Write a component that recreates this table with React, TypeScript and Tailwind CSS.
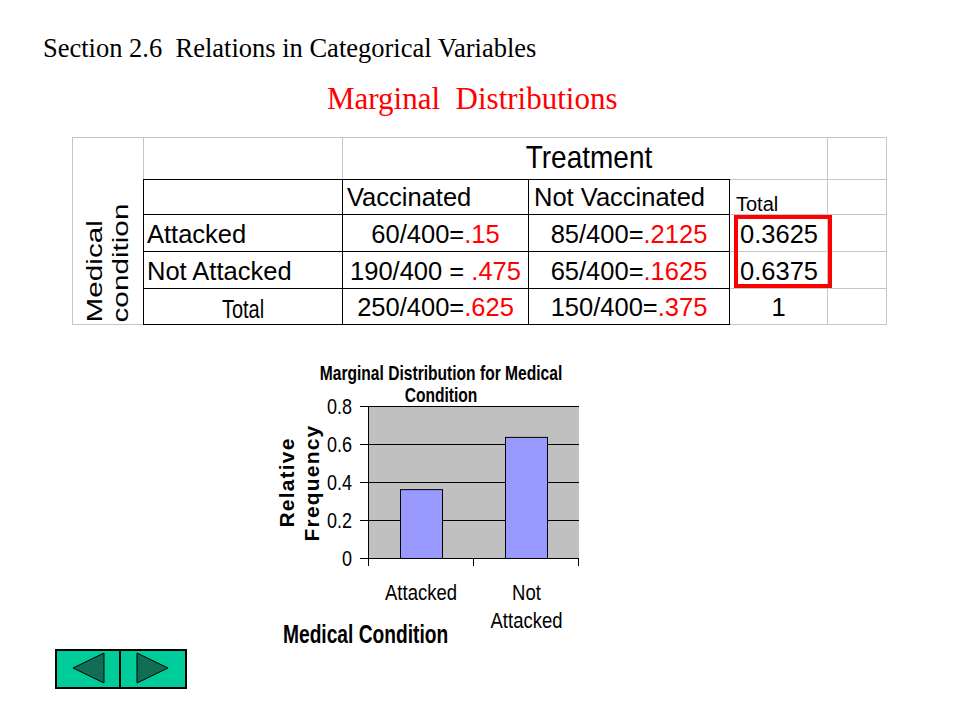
import React from "react";

const SANS = "font-['Liberation_Sans',Arial,sans-serif]";
const SERIF = "font-['Liberation_Serif','Times_New_Roman',serif]";

function Num({ a, b }: { a: string; b: string }) {
  return (
    <span className="whitespace-pre">
      {a}
      <span className="text-[#ff0000]">{b}</span>
    </span>
  );
}

const levels = [
  { v: "0", y: 203 },
  { v: "0.2", y: 165 },
  { v: "0.4", y: 127 },
  { v: "0.6", y: 89 },
  { v: "0.8", y: 51 },
];

const bars = [
  { x: 130, v: 0.3625 },
  { x: 235, v: 0.6375 },
];

function Chart() {
  const font = "'Liberation Sans', Arial, sans-serif";
  return (
    <svg
      width="330"
      height="294"
      viewBox="0 0 330 294"
      className="block mt-[30px] ml-[270px]"
      fontFamily={font}
    >
      <rect x="98" y="51" width="211" height="152" fill="#c0c0c0" />
      {levels.map((l) => (
        <line key={l.v} x1="90" x2="309" y1={l.y + 0.5} y2={l.y + 0.5} stroke="#000" strokeWidth="1" />
      ))}
      {bars.map((b) => (
        <rect
          key={b.x}
          x={b.x + 0.5}
          y={203.5 - b.v * 190}
          width="42"
          height={b.v * 190}
          fill="#9999ff"
          stroke="#000"
          strokeWidth="1"
        />
      ))}
      <line x1="98.5" x2="98.5" y1="51" y2="204" stroke="#000" strokeWidth="1" />
      <line x1="98" x2="309" y1="203.5" y2="203.5" stroke="#000" strokeWidth="1" />
      {[98.5, 203.5, 308.5].map((x) => (
        <line key={x} x1={x} x2={x} y1="203" y2="211" stroke="#000" strokeWidth="1" />
      ))}
      {levels.map((l) => (
        <text
          key={"t" + l.v}
          transform={`translate(82 ${l.y + 7.5}) scale(1 1.2)`}
          textAnchor="end"
          fontSize="18"
          fill="#000"
        >
          {l.v}
        </text>
      ))}
      <text transform="translate(171 25) scale(1 1.25)" textAnchor="middle" fontSize="15.6" fontWeight="bold">
        Marginal Distribution for Medical
      </text>
      <text transform="translate(171 47) scale(1 1.25)" textAnchor="middle" fontSize="15.6" fontWeight="bold">
        Condition
      </text>
      <text transform="translate(24 127.5) rotate(-90)" textAnchor="middle" fontSize="21" fontWeight="bold" letterSpacing="1.2">
        Relative
      </text>
      <text transform="translate(49 128) rotate(-90)" textAnchor="middle" fontSize="21" fontWeight="bold" letterSpacing="1.2">
        Frequency
      </text>
      <text transform="translate(151 245) scale(1 1.2)" textAnchor="middle" fontSize="18.5">
        Attacked
      </text>
      <text transform="translate(256.5 245) scale(1 1.2)" textAnchor="middle" fontSize="18.5">
        Not
      </text>
      <text transform="translate(256.5 273) scale(1 1.2)" textAnchor="middle" fontSize="18.5">
        Attacked
      </text>
      <text transform="translate(13 288) scale(1 1.3)" fontSize="19.2" fontWeight="bold">
        Medical Condition
      </text>
    </svg>
  );
}

function Nav() {
  return (
    <div className="ml-[55px] flex w-[132px] h-[40px] border-2 border-black bg-[#00cc99]">
      <div className="w-[64px] h-full border-r-2 border-black">
        <svg width="62" height="36" className="block">
          <polygon points="16,17 47,2 47,32" fill="#116e55" stroke="#000" strokeWidth="1" />
        </svg>
      </div>
      <div className="w-[64px] h-full">
        <svg width="64" height="36" className="block">
          <polygon points="16,2 16,32 47,17" fill="#116e55" stroke="#000" strokeWidth="1" />
        </svg>
      </div>
    </div>
  );
}

function Table() {
  const g = "border-[#c6c6c6]";
  const k = "border-black";
  return (
    <div
      className={`relative mt-[23px] ml-[72px] w-[815px] grid grid-cols-[70px_200px_186px_201px_98px_59px] grid-rows-[41px_36px_37px_37px_36px] border-t border-l ${g} ${SANS} text-[25.5px] leading-none text-black`}
    >
      {/* left merged column */}
      <div className={`col-start-1 row-start-1 row-span-5 border-b ${g} flex items-end justify-center pb-[17px]`}>
        <div className="[writing-mode:vertical-rl] rotate-180 scale-y-135 text-[22px] leading-[26px] whitespace-nowrap">
          Medical
          <br />
          condition
        </div>
      </div>

      {/* row 0 */}
      <div className={`col-start-2 row-start-1 border-l border-r ${g}`} />
      <div className={`col-start-3 col-span-3 row-start-1 border-r ${g} flex items-end justify-center pb-[5px] pl-[8px]`}>
        <span className="inline-block text-[28px] scale-y-110 origin-bottom">Treatment</span>
      </div>
      <div className={`col-start-6 row-start-1 border-r ${g}`} />

      {/* row 1 */}
      <div className={`col-start-2 row-start-2 border-l border-r border-t border-b ${k}`} />
      <div className={`col-start-3 row-start-2 border-r border-t border-b ${k} flex items-end pl-[4px] pb-[4px]`}>
        Vaccinated
      </div>
      <div className={`col-start-4 row-start-2 border-r border-t border-b ${k} flex items-end pl-[5px] pb-[4px]`}>
        Not Vaccinated
      </div>
      <div className={`col-start-5 row-start-2 border-r border-t border-b ${g} flex items-end pl-[6px] pb-0 text-[20px]`}>
        Total
      </div>
      <div className={`col-start-6 row-start-2 border-r border-t border-b ${g}`} />

      {/* row 2 */}
      <div className={`col-start-2 row-start-3 border-l border-r border-b ${k} flex items-end pl-[3px] pb-[4px]`}>
        Attacked
      </div>
      <div className={`col-start-3 row-start-3 border-r border-b ${k} flex items-end justify-center pb-[4px]`}>
        <Num a="60/400=" b=".15" />
      </div>
      <div className={`col-start-4 row-start-3 border-r border-b ${k} flex items-end justify-center pb-[4px]`}>
        <Num a="85/400=" b=".2125" />
      </div>
      <div className={`col-start-5 row-start-3 border-r border-b ${g} flex items-end pl-[10px] pb-[4px]`}>
        0.3625
      </div>
      <div className={`col-start-6 row-start-3 border-r border-b ${g}`} />

      {/* row 3 */}
      <div className={`col-start-2 row-start-4 border-l border-r border-b ${k} flex items-end pl-[3px] pb-[4px]`}>
        Not Attacked
      </div>
      <div className={`col-start-3 row-start-4 border-r border-b ${k} flex items-end justify-center pb-[4px]`}>
        <Num a="190/400 = " b=".475" />
      </div>
      <div className={`col-start-4 row-start-4 border-r border-b ${k} flex items-end justify-center pb-[4px]`}>
        <Num a="65/400=" b=".1625" />
      </div>
      <div className={`col-start-5 row-start-4 border-r border-b ${g} flex items-end pl-[10px] pb-[4px]`}>
        0.6375
      </div>
      <div className={`col-start-6 row-start-4 border-r border-b ${g}`} />

      {/* row 4 */}
      <div className={`col-start-2 row-start-5 border-l border-r border-b ${k} flex items-end justify-center pb-[2px]`}>
        <span className="inline-block text-[20px] scale-y-125 origin-bottom">Total</span>
      </div>
      <div className={`col-start-3 row-start-5 border-r border-b ${k} flex items-end justify-center pb-[4px]`}>
        <Num a="250/400=" b=".625" />
      </div>
      <div className={`col-start-4 row-start-5 border-r border-b ${k} flex items-end justify-center pb-[4px]`}>
        <Num a="150/400=" b=".375" />
      </div>
      <div className={`col-start-5 row-start-5 border-r border-b ${g} flex items-end justify-center pb-[4px]`}>
        1
      </div>
      <div className={`col-start-6 row-start-5 border-r border-b ${g}`} />

      {/* highlight box */}
      <div className="absolute left-[661px] top-[77px] w-[98px] h-[73px] border-4 border-[#ff0000]" />
    </div>
  );
}

export default function App() {
  return (
    <div className="w-[960px] h-[720px] bg-white overflow-hidden flex flex-col">
      <div className={`pl-[43px] pt-[35px] ${SERIF} text-[26.5px] leading-none whitespace-pre text-black`}>
        Section 2.6  Relations in Categorical Variables
      </div>
      <div className={`mt-[21.5px] pl-[327px] ${SERIF} text-[31px] leading-none whitespace-pre text-[#ff0000]`}>
        Marginal  Distributions
      </div>
      <Table />
      <Chart />
      <Nav />
    </div>
  );
}
